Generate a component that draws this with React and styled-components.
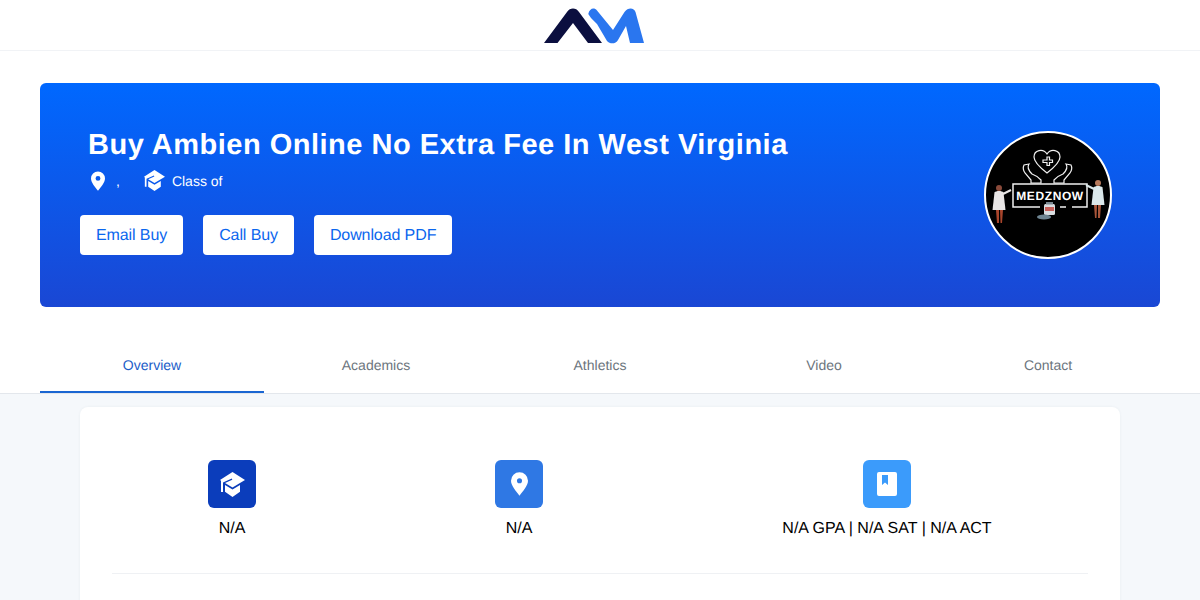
import styled, { createGlobalStyle } from "styled-components";

const GlobalStyle = createGlobalStyle`
  html, body {
    margin: 0;
    padding: 0;
    background: #f5f8fb;
    font-family: "Liberation Sans", Arial, sans-serif;
    text-rendering: geometricPrecision;
  }
  * {
    box-sizing: border-box;
  }
`;

const Page = styled.div`
  height: 600px;
  overflow: hidden;
`;

const Header = styled.header`
  height: 51px;
  background: #fff;
  border-bottom: 1px solid #f1f3f6;
  display: flex;
  justify-content: center;
  align-items: flex-start;
  padding-top: 8px;
`;

const LogoMark = styled.svg`
  display: block;
  width: 112px;
  height: 36px;
`;

const TopSection = styled.section`
  background: #fff;
  padding: 32px 40px 30px;
`;

const Hero = styled.div`
  height: 224px;
  border-radius: 6px;
  background: linear-gradient(180deg, #0068ff 0%, #1a47d4 100%);
  padding: 0 48px 0 40px;
  display: flex;
  align-items: center;
  justify-content: space-between;
`;

const HeroInfo = styled.div`
  display: flex;
  flex-direction: column;
  margin-top: -10px;
`;

const Title = styled.h1`
  margin: 1px 0 0 8px;
  color: #fff;
  font-size: 29px;
  line-height: 36px;
  font-weight: 700;
  letter-spacing: 0.5px;
`;

const MetaRow = styled.div`
  display: flex;
  align-items: center;
  height: 24px;
  margin: 6px 0 22px 11px;
  color: #fff;
  font-size: 14px;
`;

const MetaIcon = styled.svg`
  display: block;
  fill: #fff;
  width: ${(p) => p.$w}px;
  height: ${(p) => p.$h}px;
`;

const Comma = styled.span`
  margin: 0 24px 0 11px;
`;

const ClassLabel = styled.span`
  margin-left: 7px;
`;

const ButtonRow = styled.div`
  display: flex;
  gap: 20px;
`;

const HeroButton = styled.a`
  height: 40px;
  padding: 3px 16px 0;
  background: #fff;
  border-radius: 4px;
  color: #0b66ee;
  font-size: 16px;
  letter-spacing: -0.1px;
  display: flex;
  align-items: center;
`;

const Avatar = styled.svg`
  display: block;
  width: 128px;
  height: 128px;
  flex: none;
`;

const TabBar = styled.nav`
  background: #fff;
  border-bottom: 1px solid #e3e7ec;
  display: grid;
  grid-template-columns: repeat(5, 1fr);
  padding: 0 40px;
`;

const Tab = styled.a`
  height: 56px;
  padding-top: 2px;
  display: flex;
  align-items: center;
  justify-content: center;
  font-size: 14px;
  color: ${(p) => (p.$active ? "#1a5cc8" : "#6c757d")};
  border-bottom: 2px solid ${(p) => (p.$active ? "#1a66d2" : "transparent")};
`;

const Card = styled.div`
  width: 1040px;
  margin: 13px auto 0;
  background: #fff;
  border-radius: 8px;
  box-shadow: 0 0 3px rgba(40, 60, 90, 0.06);
  padding: 53px 32px 60px;
`;

const Stats = styled.div`
  display: grid;
  grid-template-columns: 240px 334px 402px;
  padding-bottom: 32px;
  border-bottom: 1px solid #eff1f4;
`;

const Stat = styled.div`
  display: flex;
  flex-direction: column;
  align-items: center;
  gap: 9px;
  color: #000;
  font-size: 16px;
  line-height: 24px;
`;

const StatIcon = styled.div`
  width: 48px;
  height: 48px;
  border-radius: 6px;
  background: ${(p) => p.$bg};
  display: flex;
  align-items: center;
  justify-content: center;
`;

const CapIcon = ({ size }) => (
  <MetaIcon $w={size} $h={size} viewBox="0 0 25 25">
    <path d="M12.5 0 25 8 12.500 15.500 5 11l7.300-3.200-.5-1.200L3 10.400V20H1V8.800L0 8z" />
    <path d="M5 13l7.500 4.500L20 13v6.800L12.500 25 5 19.800z" />
  </MetaIcon>
);

const PinIcon = ({ w, h, hole }) => (
  <MetaIcon $w={w} $h={h} viewBox="0 0 16 22">
    <path
      fillRule="evenodd"
      d={`M8 0a8 8 0 0 1 8 8c0 4.6-5 10.4-8 14C5 18.4 0 12.6 0 8a8 8 0 0 1 8-8zm0 ${8 - hole}a${hole} ${hole} 0 1 0 0 ${hole * 2}a${hole} ${hole} 0 1 0 0-${hole * 2}z`}
    />
  </MetaIcon>
);

const BookIcon = () => (
  <MetaIcon $w={20} $h={24} viewBox="0 0 20 24">
    <path
      fillRule="evenodd"
      d="M2 0h16a2 2 0 0 1 2 2v20a2 2 0 0 1-2 2H2a2 2 0 0 1-2-2V2a2 2 0 0 1 2-2zm3 3v10l3-2.6 3 2.6V3z"
    />
  </MetaIcon>
);

const Logo = () => (
  <LogoMark viewBox="0 0 112 36">
    <path
      fill="#2a76ef"
      d="M44.300 6C45.500 .5 50 -1 53 2.500L69 22 80.500 4C84 -1 90 -.5 91.500 4L100 35H86L82 18 74 32C72 36 66 36.500 63 33L53 16 47 10z"
    />
    <path
      fill="#0b0f3f"
      d="M0 35 23 4c3-4.600 9-4.600 12 0L58 35H44L29 15 13.500 35z"
    />
  </LogoMark>
);

const Doctor = ({ x, y, coat, skin, legs, flip }) => (
  <g transform={`translate(${x} ${y})${flip ? " scale(-1 1)" : ""}`}>
    <circle cx="7" cy="3" r="3" fill={skin} />
    <path fill={coat} d="M2.500 7.500c1.500-2 7.500-2 9 0L13.500 25H.5z" />
    <path fill={legs} d="M4 25h3v13H5zM8 25h3l-1 13H8.500z" />
    <path stroke={coat} strokeWidth="2" d="M11 9 19 5" fill="none" />
  </g>
);

const MedzAvatar = () => (
  <Avatar viewBox="0 0 128 128">
    <circle cx="64" cy="64" r="63" fill="#000" stroke="#fff" strokeWidth="2" />
    <g fill="none" stroke="#f0f0f0" strokeWidth="1.200">
      <path d="M63 42C54 35 50 30 50 26c0-7 9-9 13-3 4-6 13-4 13 3 0 4-4 9-13 16z" />
      <path d="M61 27h4v-3h2.500v3h3v2.500h-3v3H65v-3h-4z" transform="translate(-2 2)" />
      <path d="M45 33c-2 3 0 7 3 10 3 1 7 4 9 6v3H47v-3l-6-7c-2-3-2-6-1-8zM82 33c2 3 0 7-3 10-3 1-7 4-9 6v3h10v-3l6-7c2-3 2-6 1-8z" />
      <path strokeWidth="1.500" d="M29 72V53h74v23H88M56 76H29v-4M76 76h6" />
    </g>
    <text
      x="66"
      y="69"
      textAnchor="middle"
      fontFamily="Liberation Sans, Arial, sans-serif"
      fontWeight="700"
      fontSize="12"
      letterSpacing="0.600"
      fill="#fff"
    >
      MEDZNOW
    </text>
    <Doctor x={8} y={54} coat="#e9e6e6" skin="#8a4a3a" legs="#a8452c" />
    <Doctor x={121} y={49} coat="#dbe8ea" skin="#b77a5c" legs="#a8553a" flip />
    <rect x="60" y="73" width="11" height="11" rx="1.500" fill="#d9dde0" />
    <rect x="62" y="71" width="7" height="2.500" fill="#7a8790" />
    <rect x="61" y="76" width="9" height="4" fill="#c7605a" />
    <ellipse cx="60" cy="86" rx="7" ry="2.500" fill="#6e8592" />
  </Avatar>
);

const tabs = ["Overview", "Academics", "Athletics", "Video", "Contact"];

export default function App() {
  return (
    <Page>
      <GlobalStyle />
      <Header>
        <Logo />
      </Header>
      <TopSection>
        <Hero>
          <HeroInfo>
            <Title>Buy Ambien Online No Extra Fee In West Virginia</Title>
            <MetaRow>
              <PinIcon w={14} h={20} hole={2.8} />
              <Comma>,</Comma>
              <CapIcon size={21} />
              <ClassLabel>Class of</ClassLabel>
            </MetaRow>
            <ButtonRow>
              <HeroButton>Email Buy</HeroButton>
              <HeroButton>Call Buy</HeroButton>
              <HeroButton>Download PDF</HeroButton>
            </ButtonRow>
          </HeroInfo>
          <MedzAvatar />
        </Hero>
      </TopSection>
      <TabBar>
        {tabs.map((t, i) => (
          <Tab key={t} $active={i === 0}>
            {t}
          </Tab>
        ))}
      </TabBar>
      <Card>
        <Stats>
          <Stat>
            <StatIcon $bg="#0b3dbb">
              <CapIcon size={25} />
            </StatIcon>
            N/A
          </Stat>
          <Stat>
            <StatIcon $bg="#2f78e4">
              <PinIcon w={17} h={24} hole={2.4} />
            </StatIcon>
            N/A
          </Stat>
          <Stat>
            <StatIcon $bg="#3b9bfb">
              <BookIcon />
            </StatIcon>
            N/A GPA | N/A SAT | N/A ACT
          </Stat>
        </Stats>
      </Card>
    </Page>
  );
}
